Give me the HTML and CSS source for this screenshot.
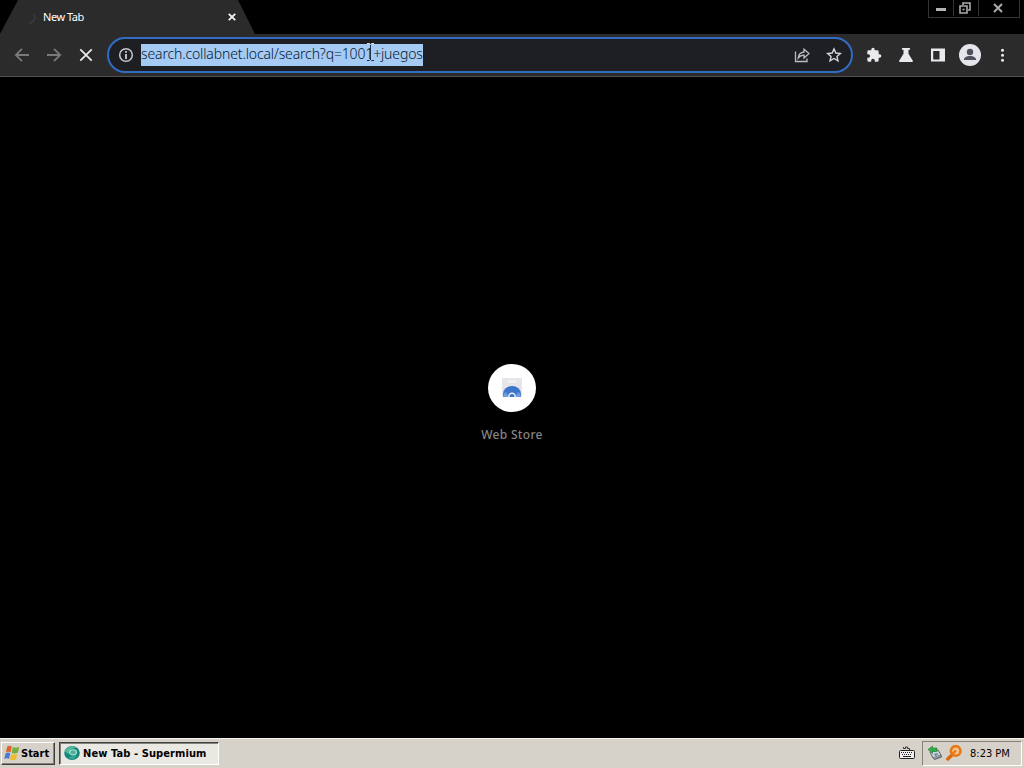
FILE: index.html
```html
<!DOCTYPE html>
<html lang="en">
<head>
    <meta charset="UTF-8">
    <meta name="viewport" content="width=device-width, initial-scale=1.0">
    <title>New Tab</title>
    <link rel="stylesheet" href="styles.css">
</head>
<body>
    <header class="tabstrip">
        <div class="tab">
            <svg class="spinner" width="16" height="16" viewBox="0 0 16 16"><path d="M8 14a6 6 0 0 0 5-9" fill="none" stroke="#3a3b3d" stroke-width="1.5"/></svg>
            <span class="tab-title">New Tab</span>
            <svg class="tab-close" width="8" height="8" viewBox="0 0 8 8"><path d="M.8.8l6.4 6.4M7.2.8L.8 7.2" stroke="#f0f0f0" stroke-width="1.9"/></svg>
        </div>
        <div class="window-buttons">
            <div class="win-btn"><svg width="10" height="12" viewBox="0 0 10 12"><path d="M0 7.500h10" stroke="#b4b4b4" stroke-width="3"/></svg></div>
            <div class="win-btn"><svg width="12" height="12" viewBox="0 0 12 12" fill="none" stroke="#aaa" stroke-width="1.6"><path d="M4 3V1h7v7H9"/><path d="M1 4h7v7H1z"/><path d="M3.500 7.500h2"/></svg></div>
            <div class="win-btn wide"><svg width="10" height="10" viewBox="0 0 10 10"><path d="M1 1l8 8M9 1L1 9" stroke="#aaa" stroke-width="2"/></svg></div>
        </div>
    </header>

    <nav class="toolbar">
        <div class="nav-buttons">
            <svg width="16" height="16" viewBox="0 0 16 16"><path d="M15 8H2.200M8 1.800L1.800 8l6.200 6.200" fill="none" stroke="#77797b" stroke-width="1.800"/></svg>
            <svg width="16" height="16" viewBox="0 0 16 16"><path d="M1 8h12.800M8 1.800L14.200 8 8 14.200" fill="none" stroke="#77797b" stroke-width="1.800"/></svg>
            <svg width="16" height="16" viewBox="0 0 16 16"><path d="M2.300 2.300l11.400 11.400M13.700 2.300L2.300 13.700" stroke="#e8eaed" stroke-width="1.800"/></svg>
        </div>
        <div class="omnibox">
            <svg class="info" width="16" height="16" viewBox="0 0 16 16"><circle cx="8" cy="8" r="6.300" fill="none" stroke="#c4c7cb" stroke-width="1.500"/><path d="M8 7v5M8 4v1.700" stroke="#d5d7da" stroke-width="1.700"/></svg>
            <span class="url">search.collabnet.local/search?q=1001+juegos</span>
            <svg class="caret" width="7" height="18" viewBox="0 0 7 18"><path d="M3.500 1v16M0 17.500h2.500l1-1 1 1H7" fill="none" stroke="#1c3150"/><path d="M0 .5h2.500l1 1 1-1H7" fill="none" stroke="#e3e8ef"/></svg>
            <div class="omnibox-actions">
                <svg width="16" height="16" viewBox="0 0 16 16" fill="none" stroke="#b9bcc1" stroke-width="1.300"><path d="M1.500 4.500v10h11.500v-3"/><path d="M4.200 11c.4-3.700 2.300-5.600 5.800-6V2.200L15 6.600 10 11V8.200C7.500 8.200 5.700 9 4.200 11z"/></svg>
                <svg width="16" height="16" viewBox="0 0 16 16" fill="none" stroke="#d4d6d9" stroke-width="1.400"><path d="M8 1.900l1.850 4.150 4.500.4-3.420 2.960 1.030 4.400L8 11.500l-3.960 2.310 1.030-4.400L1.650 6.450l4.500-.4z"/></svg>
            </div>
        </div>
        <div class="extensions">
            <svg width="16" height="16" viewBox="0 0 24 24"><path fill="#e8eaed" d="M20.500 11H19V7a2 2 0 0 0-2-2h-4V3.500a2.500 2.500 0 0 0-5 0V5H4a2 2 0 0 0-2 2v3.800h1.500a2.700 2.700 0 0 1 0 5.400H2V20c0 1.100.9 2 2 2h3.800v-1.500a2.700 2.700 0 0 1 5.400 0V22H17a2 2 0 0 0 2-2v-4h1.500a2.500 2.500 0 0 0 0-5z"/></svg>
            <svg width="16" height="16" viewBox="0 0 16 16"><path fill="#e8eaed" d="M4 1h8v1.700h-1.500v4.100l4.200 6.700c.5.800 0 1.500-.8 1.500H2.100c-.8 0-1.300-.7-.8-1.500l4.200-6.700V2.700H4z"/></svg>
            <svg width="16" height="16" viewBox="0 0 16 16"><path fill="#e8eaed" fill-rule="evenodd" d="M1 1.500h14v13H1zM3.200 4v8.500h6.300V4z"/></svg>
            <svg class="avatar" width="22" height="22" viewBox="0 0 22 22"><circle cx="11" cy="11" r="11" fill="#e4e6ec"/><circle cx="11" cy="8" r="3.200" fill="#4c515b"/><path d="M4.800 16c.3-2.700 3-3.900 6.200-3.900s5.900 1.200 6.200 3.900z" fill="#4c515b"/></svg>
            <svg width="16" height="16" viewBox="0 0 16 16" fill="#e8eaed"><circle cx="8.500" cy="3.200" r="1.500"/><circle cx="8.500" cy="8.200" r="1.500"/><circle cx="8.500" cy="13.200" r="1.500"/></svg>
        </div>
    </nav>

    <main>
        <div class="shortcut">
            <div class="shortcut-icon">
                <svg width="22" height="22" viewBox="0 0 22 22"><path d="M1 1h20v19H1z" fill="#e4e6e9"/><path d="M7 4.500h8" stroke="#f5f5f5" stroke-width="2"/><path d="M2 20v-3a9 8 0 0 1 18 0v3z" fill="#3d75ca"/><path d="M2 20c0-2 1-4 3-5l3 5zM20 20c0-2-1-4-3-5l-3 5z" fill="#6d9ce0"/><path d="M7 20a4 4.500 0 0 1 8 0z" fill="#e4edfa"/><path d="M8.500 20a2.500 3 0 0 1 5 0z" fill="#3d75ca"/></svg>
            </div>
            <span class="shortcut-title">Web Store</span>
        </div>
    </main>

    <footer class="taskbar">
        <button class="start">
            <svg width="16" height="16" viewBox="0 0 16 16"><path d="M3.200 1.500c2-1.200 3.400-.8 4.600 0L6.600 7.300c-1.400-.9-3-.9-4.700 0z" fill="#e2642d"/><path d="M8.800 2c1.800 1 3.900 1 6.500 0l-1.500 5.800c-2.200 1-4.200.9-6.100 0z" fill="#74ae3c"/><path d="M1.600 8.300c1.700-1 3.200-.9 4.700 0L5 14c-1.500-.9-3-.9-4.700.1z" fill="#4b7bd0"/><path d="M7.400 8.900c1.800.9 3.900 1 6.100 0L12 14.600c-2.200 1-4.200 1-6.100 0z" fill="#eebc32"/></svg>
            <span>Start</span>
        </button>
        <div class="task">
            <svg width="16" height="16" viewBox="0 0 16 16"><ellipse cx="8" cy="8" rx="7.800" ry="7" fill="#16877c"/><path d="M.5 6a7.800 7 0 0 1 12-3.500L7 4 4 9z" fill="#55b79c"/><path d="M4 13.500l4-3 5-1-3 4.500z" fill="#36a891"/><ellipse cx="9" cy="7.200" rx="4" ry="3" fill="#b5e5d5"/><ellipse cx="9" cy="7.200" rx="2.800" ry="2" fill="#46b49b"/></svg>
            <span>New Tab - Supermium</span>
        </div>
        <div class="keyboard">
            <svg width="16" height="16" viewBox="0 0 16 16"><path d="M4.500 2v1.500h2V2h2v1.500h2V5.500" fill="none" stroke="#333"/><rect x=".5" y="5.500" width="15" height="8" rx="1" fill="#eee" stroke="#222"/><path d="M2 7.500h12M3 9.500h10" stroke="#222" stroke-dasharray="1 1"/><path d="M4 11.500h8" stroke="#222"/></svg>
        </div>
        <div class="tray">
            <svg width="16" height="16" viewBox="0 0 16 16"><path d="M3 7l8-2 3 5-8 3z" fill="#ccd4da" stroke="#59636b"/><path d="M7 9l3-1 1 2-3 1z" fill="#6f87a8"/><path d="M6 12.500l1.500 2 7-2.500-.5-2" fill="#8f989e" stroke="#59636b"/><path d="M1 4.500L5.500 1v2H10v3.500H5.500v2z" fill="#35ac45" stroke="#23823a" stroke-width=".6"/></svg>
            <svg width="16" height="16" viewBox="0 0 16 16"><path d="M6.500 9.500L1.800 14" stroke="#d96a10" stroke-width="3.400" stroke-linecap="round"/><circle cx="9.700" cy="6" r="4.800" fill="#f6c48a" stroke="#e67817" stroke-width="2.600"/><path d="M7 8.500l3-3" stroke="#e67817" stroke-width="2.400"/></svg>
            <span class="clock">8:23 PM</span>
        </div>
    </footer>
</body>
</html>
```
FILE: styles.css
```css
* {
    margin: 0;
    padding: 0;
    box-sizing: border-box;
}

body {
    display: flex;
    flex-direction: column;
    height: 768px;
    overflow: hidden;
    background-color: #000;
    color: #fff;
    font-family: "DejaVu Sans Condensed", "DejaVu Sans", sans-serif;
    font-size: 11px;
}

svg {
    display: block;
    flex-shrink: 0;
}

.tabstrip {
    display: flex;
    justify-content: space-between;
    height: 34px;
}

.tab {
    display: flex;
    align-items: center;
    width: 255px;
    height: 34px;
    padding: 0 19px 0 21px;
    background-color: #2b2b2c;
    clip-path: polygon(18px 0, 238px 0, 255px 34px, 0 34px);
}

.tab-title {
    flex: 1;
    margin-left: 6px;
    padding-bottom: 2px;
    font-family: "Noto Sans", sans-serif;
    letter-spacing: -0.45px;
}

.window-buttons {
    display: flex;
    height: 18px;
    margin-right: 4px;
    padding-bottom: 1px;
    border: 1px solid #343434;
    border-top: none;
}

.win-btn {
    display: flex;
    align-items: center;
    justify-content: center;
    width: 24px;
}

.win-btn + .win-btn {
    width: 25px;
    padding-right: 2px;
    border-left: 1px solid #343434;
}

.win-btn.wide {
    width: 41px;
}

.toolbar {
    display: flex;
    align-items: center;
    height: 43px;
    background-color: #2b2b2c;
    border-bottom: 1px solid #515151;
}

.nav-buttons {
    display: flex;
    gap: 16px;
    padding-left: 14px;
}

.omnibox {
    position: relative;
    display: flex;
    align-items: center;
    width: 746px;
    height: 36px;
    margin-left: 13px;
    padding: 0 9px;
    border: 2px solid #326bc2;
    border-radius: 18px;
    background-color: #1e1f22;
}

.url {
    height: 22px;
    margin-left: 7px;
    background-color: #a5cbf5;
    color: #06182e;
    font-family: "Noto Sans", sans-serif;
    font-size: 14px;
    font-weight: 300;
    line-height: 20px;
    letter-spacing: -0.14px;
    white-space: nowrap;
}

.caret {
    position: absolute;
    left: 258px;
    top: 4px;
}

.omnibox-actions {
    display: flex;
    gap: 16px;
    margin-left: auto;
}

.extensions {
    display: flex;
    align-items: center;
    gap: 16px;
    margin-left: 13px;
}

.avatar {
    margin: 0 -3px;
}

main {
    display: flex;
    align-items: center;
    justify-content: center;
    flex: 1;
}

.shortcut {
    display: flex;
    flex-direction: column;
    align-items: center;
    gap: 15px;
    margin-bottom: 8px;
}

.shortcut-icon {
    display: flex;
    align-items: center;
    justify-content: center;
    width: 48px;
    height: 48px;
    border-radius: 50%;
    background-color: #fff;
}

.shortcut-title {
    color: #858585;
    font-family: "Noto Sans", sans-serif;
    font-size: 12px;
    font-weight: 500;
    line-height: 16px;
    letter-spacing: 0.3px;
}

.taskbar {
    display: flex;
    align-items: center;
    height: 30px;
    padding: 0 2px 1px 1px;
    background-color: #d6d2ca;
    border-top: 1px solid #f4f3ef;
    color: #000;
}

.start,
.task {
    display: flex;
    align-items: center;
    font-family: "DejaVu Sans Condensed", "DejaVu Sans", sans-serif;
    font-size: 11px;
    font-weight: bold;
    white-space: nowrap;
}

.start {
    width: 54px;
    height: 23px;
    gap: 1px;
    padding-left: 2px;
    background-color: #d6d2ca;
    border: 1px solid;
    border-color: #fff #404040 #404040 #fff;
    box-shadow: inset -1px -1px #85827d;
    color: #000;
}

.task {
    width: 160px;
    height: 23px;
    gap: 3px;
    margin-left: 4px;
    padding-left: 4px;
    background-color: #eae8e3;
    border: 1px solid;
    border-color: #404040 #fff #fff #404040;
    box-shadow: inset 1px 1px #85827d;
    letter-spacing: 0.1px;
}

.keyboard {
    margin-left: auto;
    margin-right: 7px;
}

.tray {
    display: flex;
    align-items: center;
    width: 100px;
    height: 25px;
    gap: 3px;
    padding-left: 4px;
    border: 1px solid;
    border-color: #85827d #fff #fff #85827d;
}

.clock {
    margin-left: 5px;
    white-space: nowrap;
}
```
